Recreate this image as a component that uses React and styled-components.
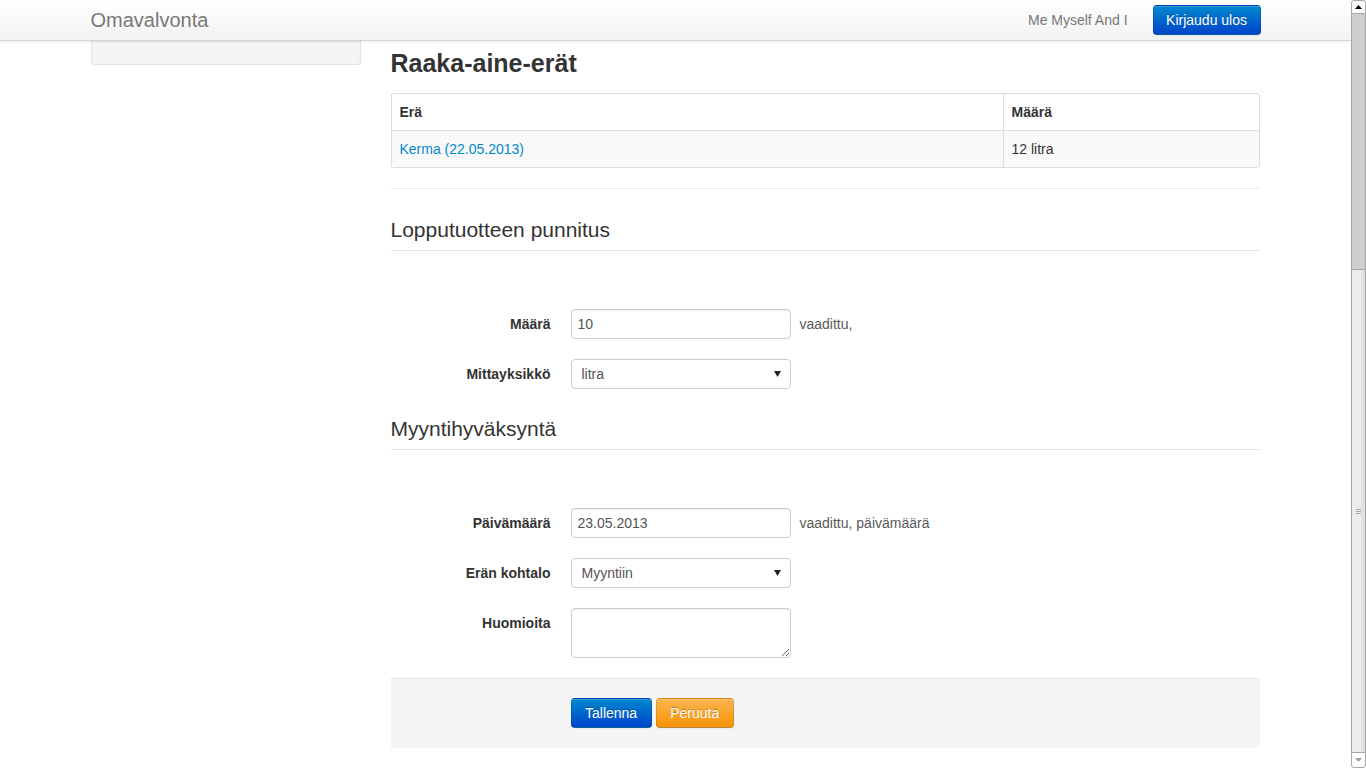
import React from 'react';
import styled, { createGlobalStyle, css } from 'styled-components';

const GlobalStyle = createGlobalStyle`
  html, body {
    margin: 0;
    height: 100%;
    overflow: hidden;
    background: #fff;
  }
  body {
    font-family: "Liberation Sans", Arial, Helvetica, sans-serif;
    font-size: 14px;
    line-height: 20px;
    color: #333;
  }
  * {
    box-sizing: border-box;
  }
`;

const Page = styled.div`
  display: flex;
  height: 100vh;
`;

const Viewport = styled.div`
  flex: 1;
  display: flex;
  flex-direction: column;
  overflow: hidden;
`;

const Navbar = styled.div`
  height: 41px;
  flex-shrink: 0;
  background: linear-gradient(to bottom, #ffffff, #f2f2f2);
  border-bottom: 1px solid #d4d4d4;
  box-shadow: 0 1px 4px rgba(0, 0, 0, 0.065);
  position: relative;
  z-index: 2;
`;

const Container = styled.div`
  width: 1170px;
  margin: 0 auto;
  display: flex;
`;

const NavInner = styled(Container)`
  height: 40px;
  align-items: center;
  justify-content: space-between;
`;

const Brand = styled.a`
  font-size: 20px;
  font-weight: 200;
  color: #777;
  text-decoration: none;
  text-shadow: 0 1px 0 #fff;
`;

const NavRight = styled.div`
  display: flex;
  align-items: center;
  gap: 25px;
`;

const NavText = styled.span`
  color: #777;
`;

const Button = styled.button`
  font-family: inherit;
  font-size: 14px;
  line-height: 20px;
  height: 30px;
  padding: 4px ${p => (p.$wide ? 13.5 : 12.5)}px;
  border-radius: 4px;
  color: #fff;
  cursor: pointer;
  text-shadow: 0 -1px 0 rgba(0, 0, 0, 0.25);
  border: 1px solid rgba(0, 0, 0, 0.1);
  border-bottom-color: rgba(0, 0, 0, 0.25);
  box-shadow: inset 0 1px 0 rgba(255, 255, 255, 0.2), 0 1px 2px rgba(0, 0, 0, 0.05);
  ${p => p.$kind === 'warning'
    ? css`background: linear-gradient(to bottom, #fbb450, #f89406);`
    : css`background: linear-gradient(to bottom, #0088cc, #0044cc);`}
`;

const Body = styled(Container)`
  gap: 30px;
  align-items: flex-start;
`;

const Sidebar = styled.div`
  width: 270px;
`;

const Well = styled.div`
  height: 24px;
  background: #f5f5f5;
  border: 1px solid #e3e3e3;
  border-top: none;
  border-radius: 0 0 4px 4px;
  box-shadow: inset 0 1px 1px rgba(0, 0, 0, 0.05);
`;

const Content = styled.div`
  width: 869px;
`;

const Heading = styled.h3`
  margin: 2px 0 10px;
  font-size: 25px;
  line-height: 40px;
  font-weight: bold;
  color: #333;
`;

const Table = styled.table`
  width: 100%;
  border-collapse: separate;
  border-spacing: 0;
  border: 1px solid #ddd;
  border-left: 0;
  border-radius: 4px;
  margin-bottom: 20px;
`;

const Th = styled.th`
  text-align: left;
  font-weight: bold;
  padding: 8px;
  line-height: 20px;
  border-left: 1px solid #ddd;
  width: ${p => p.$width || 'auto'};
`;

const Td = styled.td`
  padding: 8px;
  line-height: 20px;
  border-left: 1px solid #ddd;
  border-top: 1px solid #ddd;
  background: #f9f9f9;
`;

const Link = styled.a`
  color: #0088cc;
  text-decoration: none;
`;

const Rule = styled.hr`
  margin: 20px 0;
  border: 0;
  border-top: 1px solid #eee;
  border-bottom: 1px solid #fff;
`;

const Legend = styled.div`
  font-size: 21px;
  line-height: 40px;
  color: #333;
  border-bottom: 1px solid #e5e5e5;
  margin-bottom: 58px;
`;

const ControlGroup = styled.div`
  display: flex;
  align-items: flex-start;
  margin-bottom: 20px;
`;

const Label = styled.label`
  width: 160px;
  text-align: right;
  padding-top: 5px;
  font-weight: bold;
`;

const Controls = styled.div`
  margin-left: 20px;
  display: flex;
  align-items: center;
`;

const fieldBase = css`
  width: 220px;
  font-family: inherit;
  font-size: 14px;
  line-height: 20px;
  color: #555;
  background: #fff;
  border: 1px solid #ccc;
  border-radius: 4px;
  box-shadow: inset 0 1px 1px rgba(0, 0, 0, 0.075);
`;

const Input = styled.input`
  ${fieldBase}
  height: 30px;
  padding: 4px 6px;
`;

const TextArea = styled.textarea`
  ${fieldBase}
  height: 50px;
  padding: 4px 6px;
  display: block;
`;

const SelectWrap = styled.div`
  position: relative;
`;

const Select = styled.select`
  ${fieldBase}
  height: 30px;
  padding: 4px 24px 4px 10px;
  appearance: none;
  box-shadow: none;
  display: block;
`;

const Caret = styled.svg`
  position: absolute;
  right: 10px;
  top: 12px;
  pointer-events: none;
`;

const HelpInline = styled.span`
  margin-left: 9px;
  color: #595959;
`;

const FormActions = styled.div`
  display: flex;
  gap: 4px;
  margin-top: 20px;
  padding: 19px 20px 20px 180px;
  background: #f5f5f5;
  border-top: 1px solid #e5e5e5;
`;

const ScrollBar = styled.div`
  width: 15px;
  flex-shrink: 0;
  display: flex;
  flex-direction: column;
  background: #fff;
`;

const ScrollButton = styled.div`
  height: ${p => p.$h}px;
  display: flex;
  align-items: center;
  justify-content: center;
  background: #fff;
  border: 1px solid #a6a6a6;
  border-radius: ${p => (p.$down ? '0 0 3px 3px' : '3px 3px 0 0')};
`;

const ScrollTrack = styled.div`
  height: ${p => p.$h}px;
  background: #cfcfcf;
  border-left: 1px solid #a6a6a6;
  border-right: 1px solid #a6a6a6;
`;

const ScrollThumb = styled.div`
  flex: 1;
  display: flex;
  align-items: center;
  justify-content: center;
  background: linear-gradient(to right, #ececec 70%, #e2e2e2 70%);
  border: 1px solid #a6a6a6;
  border-bottom: none;
`;

const Grip = styled.div`
  width: 5px;
  height: 5px;
  border-top: 1px solid #a8a8a8;
  border-bottom: 1px solid #a8a8a8;
  position: relative;
  &::after {
    content: '';
    position: absolute;
    left: 0;
    right: 0;
    top: 1px;
    border-top: 1px solid #a8a8a8;
  }
`;

const SelectField = ({ value }) => (
  <SelectWrap>
    <Select defaultValue={value}>
      <option>{value}</option>
    </Select>
    <Caret width="7" height="6" viewBox="0 0 7 6">
      <path d="M0 0 H7 L3.5 6 Z" fill="#222" />
    </Caret>
  </SelectWrap>
);

const App = () => {
  return (
    <Page>
      <GlobalStyle />
      <Viewport>
        <Navbar>
          <NavInner>
            <Brand href="#">Omavalvonta</Brand>
            <NavRight>
              <NavText>Me Myself And I</NavText>
              <Button>Kirjaudu ulos</Button>
            </NavRight>
          </NavInner>
        </Navbar>

        <Body>
          <Sidebar>
            <Well />
          </Sidebar>

          <Content>
            <Heading>Raaka-aine-erät</Heading>
            <Table>
              <thead>
                <tr>
                  <Th>Erä</Th>
                  <Th $width="256px">Määrä</Th>
                </tr>
              </thead>
              <tbody>
                <tr>
                  <Td><Link href="#">Kerma (22.05.2013)</Link></Td>
                  <Td>12 litra</Td>
                </tr>
              </tbody>
            </Table>

            <Rule />

            <Legend>Lopputuotteen punnitus</Legend>
            <ControlGroup>
              <Label>Määrä</Label>
              <Controls>
                <Input defaultValue="10" />
                <HelpInline>vaadittu,</HelpInline>
              </Controls>
            </ControlGroup>
            <ControlGroup>
              <Label>Mittayksikkö</Label>
              <Controls>
                <SelectField value="litra" />
              </Controls>
            </ControlGroup>

            <Legend>Myyntihyväksyntä</Legend>
            <ControlGroup>
              <Label>Päivämäärä</Label>
              <Controls>
                <Input defaultValue="23.05.2013" />
                <HelpInline>vaadittu, päivämäärä</HelpInline>
              </Controls>
            </ControlGroup>
            <ControlGroup>
              <Label>Erän kohtalo</Label>
              <Controls>
                <SelectField value="Myyntiin" />
              </Controls>
            </ControlGroup>
            <ControlGroup>
              <Label>Huomioita</Label>
              <Controls>
                <TextArea />
              </Controls>
            </ControlGroup>

            <FormActions>
              <Button $wide>Tallenna</Button>
              <Button $wide $kind="warning">Peruuta</Button>
            </FormActions>
          </Content>
        </Body>
      </Viewport>

      <ScrollBar>
        <ScrollButton $h={14}>
          <svg width="7" height="4" viewBox="0 0 7 4">
            <path d="M0 4 H7 L3.5 0 Z" fill="#000" />
          </svg>
        </ScrollButton>
        <ScrollTrack $h={255} />
        <ScrollThumb>
          <Grip />
        </ScrollThumb>
        <ScrollButton $h={16} $down>
          <svg width="7" height="4" viewBox="0 0 7 4">
            <path d="M0 0 H7 L3.5 4 Z" fill="#a0a0a0" />
          </svg>
        </ScrollButton>
      </ScrollBar>
    </Page>
  );
};

export default App;
